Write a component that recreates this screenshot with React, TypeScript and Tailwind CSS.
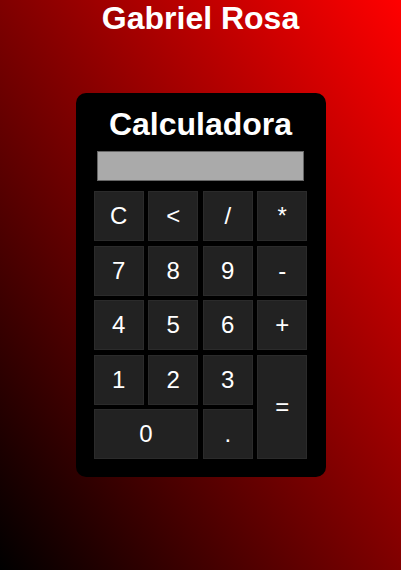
const keys = [
  { label: "C", cls: "" },
  { label: "<", cls: "" },
  { label: "/", cls: "" },
  { label: "*", cls: "" },
  { label: "7", cls: "" },
  { label: "8", cls: "" },
  { label: "9", cls: "" },
  { label: "-", cls: "" },
  { label: "4", cls: "" },
  { label: "5", cls: "" },
  { label: "6", cls: "" },
  { label: "+", cls: "" },
  { label: "1", cls: "" },
  { label: "2", cls: "" },
  { label: "3", cls: "" },
  { label: "=", cls: "row-span-2 h-auto" },
  { label: "0", cls: "col-span-2 w-auto" },
  { label: ".", cls: "" },
];

export default function App() {
  return (
    <div className="min-h-screen w-full bg-[linear-gradient(to_top_right,#000000,#ff0000)] flex flex-col items-center font-['Liberation_Sans',Arial,sans-serif] text-white">
      <h1 className="m-0 text-[32px] font-bold leading-[37px]">Gabriel Rosa</h1>

      {/* calculator */}
      <div className="mt-[56px] w-[250px] rounded-[10px] bg-black pt-[13px] pb-[18px] flex flex-col items-center">
        <h2 className="m-0 text-[32px] font-bold leading-[37px]">Calculadora</h2>
        <div className="mt-[8px] h-[30px] w-[207px] border border-[#666] bg-[#aaaaaa]" />
        <div className="mt-[10px] grid grid-cols-[repeat(4,50px)] auto-rows-[50px] gap-[4.5px]">
          {keys.map((k) => (
            <button
              key={k.label}
              className={`h-[50px] w-[50px] border border-[#2b2b2b] bg-[#222222] text-[24px] text-white flex items-center justify-center ${k.cls}`}
            >
              {k.label}
            </button>
          ))}
        </div>
      </div>
    </div>
  );
}
